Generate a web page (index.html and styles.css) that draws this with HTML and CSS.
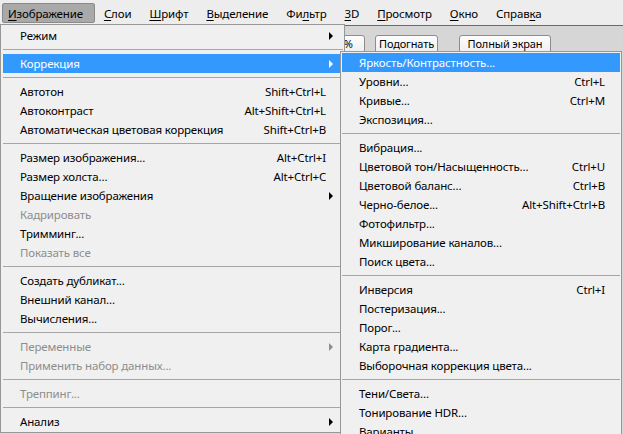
FILE: index.html
```html
<!DOCTYPE html>
<html lang="ru">
<head>
<meta charset="utf-8">
<title>Изображение</title>
<link rel="stylesheet" href="styles.css">
</head>
<body>
<div class="menubar">
  <span class="mb-item active"><u>И</u>зображение</span>
  <span class="mb-item"><u>С</u>лои</span>
  <span class="mb-item"><u>Ш</u>рифт</span>
  <span class="mb-item"><u>В</u>ыделение</span>
  <span class="mb-item">Фи<u>л</u>ьтр</span>
  <span class="mb-item"><u>3</u>D</span>
  <span class="mb-item"><u>П</u>росмотр</span>
  <span class="mb-item"><u>О</u>кно</span>
  <span class="mb-item">Справ<u>к</u>а</span>
</div>
<div class="toolbar">
  <span class="tb-btn w-zoom">100%</span>
  <span class="tb-btn w-fit">Подогнать</span>
  <span class="tb-btn w-full">Полный экран</span>
</div>

<div class="menu main-menu">
  <div class="row sub">Режим<i class="arrow"></i></div>
  <div class="sep"></div>
  <div class="row sub hl">Коррекция<i class="arrow"></i></div>
  <div class="sep"></div>
  <div class="row"><span>Автотон</span><span>Shift+Ctrl+L</span></div>
  <div class="row"><span>Автоконтраст</span><span>Alt+Shift+Ctrl+L</span></div>
  <div class="row"><span>Автоматическая цветовая коррекция</span><span>Shift+Ctrl+B</span></div>
  <div class="sep"></div>
  <div class="row"><span>Размер изображения...</span><span>Alt+Ctrl+I</span></div>
  <div class="row"><span>Размер холста...</span><span>Alt+Ctrl+C</span></div>
  <div class="row sub">Вращение изображения<i class="arrow"></i></div>
  <div class="row off">Кадрировать</div>
  <div class="row">Тримминг...</div>
  <div class="row off">Показать все</div>
  <div class="sep"></div>
  <div class="row">Создать дубликат...</div>
  <div class="row">Внешний канал...</div>
  <div class="row">Вычисления...</div>
  <div class="sep"></div>
  <div class="row sub off">Переменные<i class="arrow"></i></div>
  <div class="row off">Применить набор данных...</div>
  <div class="sep"></div>
  <div class="row off">Треппинг...</div>
  <div class="sep"></div>
  <div class="row sub">Анализ<i class="arrow"></i></div>
</div>

<div class="menu sub-menu">
  <div class="row hl">Яркость/Контрастность...</div>
  <div class="row"><span>Уровни...</span><span>Ctrl+L</span></div>
  <div class="row"><span>Кривые...</span><span>Ctrl+M</span></div>
  <div class="row">Экспозиция...</div>
  <div class="sep"></div>
  <div class="row">Вибрация...</div>
  <div class="row"><span>Цветовой тон/Насыщенность...</span><span>Ctrl+U</span></div>
  <div class="row"><span>Цветовой баланс...</span><span>Ctrl+B</span></div>
  <div class="row"><span>Черно-белое...</span><span>Alt+Shift+Ctrl+B</span></div>
  <div class="row">Фотофильтр...</div>
  <div class="row">Микширование каналов...</div>
  <div class="row">Поиск цвета...</div>
  <div class="sep"></div>
  <div class="row"><span>Инверсия</span><span>Ctrl+I</span></div>
  <div class="row">Постеризация...</div>
  <div class="row">Порог...</div>
  <div class="row">Карта градиента...</div>
  <div class="row">Выборочная коррекция цвета...</div>
  <div class="sep"></div>
  <div class="row">Тени/Света...</div>
  <div class="row">Тонирование HDR...</div>
  <div class="row">Варианты...</div>
</div>
</body>
</html>
```

FILE: styles.css
```css
html, body {
  margin: 0;
  padding: 0;
}
body {
  width: 623px;
  height: 434px;
  overflow: hidden;
  background: #d6d6d6;
  font-family: "Noto Sans", "Open Sans", sans-serif;
  font-size: 11.5px;
  letter-spacing: -0.15px;
  color: #000;
  position: relative;
}
u {
  text-decoration: underline;
  text-underline-offset: 2px;
}
.menubar {
  display: flex;
  height: 26px;
  align-items: center;
  background: #ededed;
  border-bottom: 1px solid #6a6a6a;
  padding-left: 2px;
  box-sizing: border-box;
}
.mb-item {
  height: 20px;
  line-height: 19px;
  padding: 0 8px;
  box-sizing: border-box;
  border: 1px solid transparent;
  border-radius: 2px;
}
.mb-item.active {
  background: #a9a9a9;
  border-color: #8a8a8a;
  padding-left: 5px;
  padding-right: 11px;
}
.toolbar {
  display: flex;
  gap: 10px;
  padding: 9px 0 0 313px;
  height: 26px;
}
.tb-btn {
  box-sizing: border-box;
  height: 20px;
  border: 1px solid #8d8d8d;
  border-radius: 3px;
  background: linear-gradient(#fdfdfd, #ededed);
  font-size: 11px;
  line-height: 16px;
  text-align: center;
}
.w-zoom { width: 52px; }
.w-fit { width: 63px; }
.w-full { width: 92px; margin-left: 11px; }

.menu {
  position: absolute;
  background: #f0f0f0;
  border: 1px solid #979797;
  padding: 1px;
}
.main-menu {
  left: 0;
  top: 24px;
  width: 341px;
}
.sub-menu {
  left: 340px;
  top: 51px;
  width: 278px;
}
.row {
  position: relative;
  display: flex;
  justify-content: space-between;
  align-items: center;
  height: 19px;
  padding: 0 15px 0 17px;
  white-space: nowrap;
}
.main-menu .row {
  margin-left: 1px;
  padding-right: 17px;
}
.row.off {
  color: #8d8d8d;
}
.row.hl {
  background: #3399ff;
  color: #fff;
}
.sep {
  height: 9px;
  position: relative;
}
.sep::after {
  content: "";
  position: absolute;
  left: 0;
  right: 0;
  top: 4px;
  height: 1px;
  background: #a6a6a6;
}
.main-menu .sep::after {
  left: 1px;
}
.arrow {
  position: absolute;
  right: 10px;
  top: 6px;
  width: 0;
  height: 0;
  border-left: 4px solid #000;
  border-top: 4px solid transparent;
  border-bottom: 4px solid transparent;
}
.row.hl .arrow {
  border-left-color: #fff;
}
.row.off .arrow {
  border-left-color: #8d8d8d;
}
```
